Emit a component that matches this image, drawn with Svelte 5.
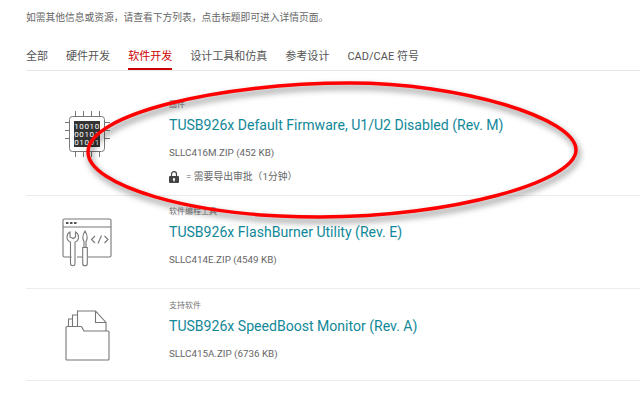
<script lang="ts">
  const tabs = [
    { label: "全部" },
    { label: "硬件开发" },
    { label: "软件开发", active: true },
    { label: "设计工具和仿真" },
    { label: "参考设计" },
    { label: "CAD/CAE 符号" },
  ];

  const rows = [
    { kind: "chip", type: "固件", title: "TUSB926x Default Firmware, U1/U2 Disabled (Rev. M)", file: "SLLC416M.ZIP (452 KB)", approval: true },
    { kind: "tools", type: "软件编程工具", title: "TUSB926x FlashBurner Utility (Rev. E)", file: "SLLC414E.ZIP (4549 KB)" },
    { kind: "folder", type: "支持软件", title: "TUSB926x SpeedBoost Monitor (Rev. A)", file: "SLLC415A.ZIP (6736 KB)" },
  ];
</script>

<main class="page">
  <p class="intro">如需其他信息或资源，请查看下方列表，点击标题即可进入详情页面。</p>

  <nav class="tabs">
    {#each tabs as tab}
      <span class="tab" class:active={tab.active}>{tab.label}</span>
    {/each}
  </nav>

  <div class="list">
    {#each rows as row}
      <div class="row">
        <div class="icon">
          {#if row.kind === "chip"}
            <svg width="46" height="46" viewBox="65 111 46 46" fill="none" stroke="#777" stroke-width="1">
              <rect x="69.500" y="116.500" width="35" height="35" rx="3" />
              <path d="M75.500 111v5M83.500 111v5M91.500 111v5M99.500 111v5M75.500 152v5M83.500 152v5M91.500 152v5M99.500 152v5M65 122.500h4M65 130.500h4M65 138.500h4M105 122.500h5M105 130.500h5M105 138.500h5" />
              <rect x="74" y="121" width="26" height="26" fill="#333" stroke="none" />
              <text x="87" y="128.500" class="bits">10010</text>
              <text x="87" y="136.500" class="bits">00101</text>
              <text x="87" y="144.500" class="bits">01001</text>
            </svg>
          {:else if row.kind === "tools"}
            <svg width="50" height="50" viewBox="62 217 50 50" fill="none" stroke="#777" stroke-width="1.100">
              <path d="M71.500 256H64.500a1.500 1.500 0 0 1-1.500-1.500V219.500a1.500 1.500 0 0 1 1.500-1.500h45a1.500 1.500 0 0 1 1.500 1.500v35a1.500 1.500 0 0 1-1.500 1.500H88M77 256H82M63 226h48" />
              <path d="M66 222h2.500M70 222h2.500M74 222h2.500" stroke-width="2" stroke="#555" />
              <path d="M70 231c-2 1-3 3-3 5 0 2.500 1.500 4.500 3.500 5.200V262.500a2.200 2.200 0 0 0 4.500 0V241.200c2-.7 3.500-2.700 3.500-5.200 0-2-1-4-3-5v5l-2.200 1.500L70 236z" />
              <path d="M85 230c-1.500 2.500-2.200 4.500-2.200 6.500 0 2 .7 3 1.200 4v6h2v-6c.5-1 1.200-2 1.200-4 0-2-.7-4-2.200-6.500z" />
              <path d="M82.700 246.500h4.600v16a2.300 2.300 0 0 1-4.600 0z" />
              <path d="M95 235l-3.500 3.500 3.500 3.500M104.500 235l3.500 3.500-3.500 3.500M101.500 234.500l-3.500 8" />
            </svg>
          {:else}
            <svg width="46" height="52" viewBox="65 309 46 52" fill="none" stroke="#777" stroke-width="1.100">
              <path d="M66 358V326.500a1 1 0 0 1 1-1h14a1 1 0 0 1 1 1l2 3.500h24a1 1 0 0 1 1 1V358a1 1 0 0 1-1 1H67a1 1 0 0 1-1-1z" />
              <path d="M68.500 325v-7h3.500M72.500 325v-11h4.500M77.500 325v-15h18l10.500 11.500v8.500M95.500 310v11.500h10.500" />
            </svg>
          {/if}
        </div>
        <div class="body">
          <div class="type">{row.type}</div>
          <div class="title">{row.title}</div>
          <div class="file">{row.file}</div>
          {#if row.approval}
            <div class="approval">
              <svg width="10" height="12" viewBox="0 0 10 12" fill="#444">
                <path d="M1 5h8a1 1 0 0 1 1 1v5a1 1 0 0 1-1 1H1a1 1 0 0 1-1-1V6a1 1 0 0 1 1-1zm4 2a1.200 1.200 0 0 0-.6 2.200V10.500h1.200V9.200A1.200 1.200 0 0 0 5 7z" fill-rule="evenodd" />
                <path d="M2.500 5.500V3.200a2.500 2.500 0 0 1 5 0v2.300" fill="none" stroke="#444" stroke-width="1.200" />
              </svg>
              <span>= 需要导出审批（1分钟）</span>
            </div>
          {/if}
        </div>
      </div>
    {/each}
  </div>

  <svg class="scribble" width="640" height="411" viewBox="0 0 640 411" fill="none">
    <path
      d="M350 83C460 83 576 118 576 150C576 182 450 217 320 217C190 217 88 185 88 152C88 114 220 83 350 83Z"
      stroke="#f00"
      stroke-width="3.500"
    />
  </svg>
</main>

<style>
  :global(body) {
    background: #fff;
  }

  .page {
    position: relative;
    width: 640px;
    height: 411px;
    overflow: hidden;
    box-sizing: border-box;
    padding: 11px 0 0 26px;
    font-family: Roboto, "Noto Sans CJK SC", sans-serif;
    color: #666;
  }

  .intro {
    margin: 0;
    font-size: 9.75px;
    line-height: 13px;
    color: #666;
  }

  .tabs {
    display: flex;
    gap: 18px;
    margin-top: 20px;
    height: 26px;
    border-bottom: 1px solid #e6e6e6;
  }

  .tab {
    box-sizing: border-box;
    height: 26px;
    padding-top: 5px;
    font-size: 11.03px;
    line-height: 15px;
    color: #555;
  }

  .tab.active {
    color: #cc0000;
    border-bottom: 2px solid #cc0000;
  }

  .row {
    display: flex;
    box-sizing: border-box;
    border-bottom: 1px solid #ececec;
    height: 93px;
  }

  .row:first-child {
    height: 125px;
  }

  .row:last-child {
    height: 92px;
  }

  .icon {
    width: 143px;
    padding-left: 36px;
    box-sizing: border-box;
    padding-top: 22px;
  }

  .row:first-child .icon {
    padding-top: 40px;
    padding-left: 39px;
  }

  .row:last-child .icon {
    padding-left: 39px;
    padding-top: 21px;
  }

  .body {
    padding-top: 10px;
  }

  .row:first-child .body {
    padding-top: 28px;
  }

  .row:last-child .body {
    padding-top: 11px;
  }

  .type {
    font-size: 8px;
    line-height: 12px;
    color: #777;
  }

  .title {
    margin-top: 4px;
    font-size: 14.07px;
    line-height: 20px;
    color: #118899;
  }

  .file {
    margin-top: 11px;
    font-size: 9.8px;
    line-height: 13px;
    color: #666;
  }

  .approval {
    display: flex;
    align-items: center;
    gap: 7px;
    margin-top: 11px;
    font-size: 9.8px;
    line-height: 13px;
    color: #666;
  }

  .bits {
    font-family: Roboto, sans-serif;
    font-size: 8px;
    letter-spacing: 0.6px;
    fill: #fff;
    stroke: none;
    text-anchor: middle;
  }

  .scribble {
    position: absolute;
    inset: 0;
    filter: drop-shadow(2px 4px 3px rgba(0, 0, 0, 0.5));
  }
</style>
